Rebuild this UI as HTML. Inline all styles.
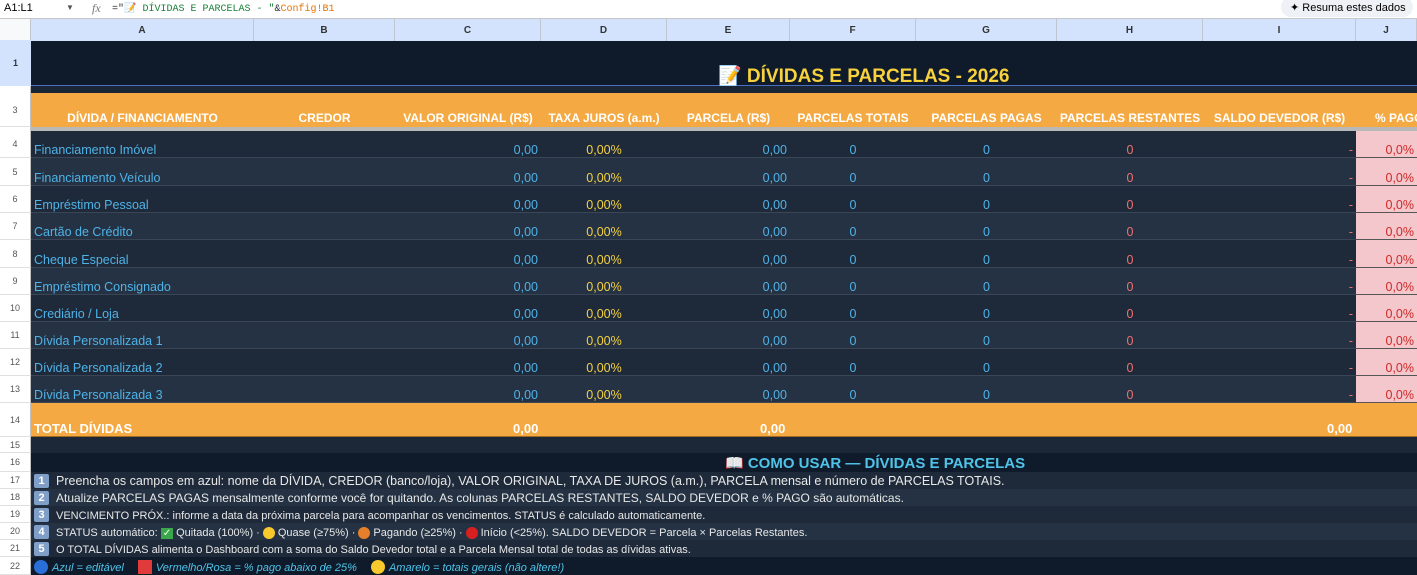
<!DOCTYPE html>
<html><head><meta charset="utf-8"><style>
*{box-sizing:border-box;margin:0;padding:0}
body{width:1417px;height:575px;overflow:hidden;background:#fff;font-family:"Liberation Sans",Arial,sans-serif;font-size:12px;position:relative}
.fb{position:absolute;left:0;top:0;width:1417px;height:19px;background:#fff;border-bottom:1px solid #c7c7c7}
.row{position:absolute;left:0;width:1417px;display:grid;grid-template-columns:31px 223px 141px 146px 126px 123px 126px 141px 146px 153px 61px}
.row>div{overflow:hidden;white-space:nowrap;display:flex;align-items:flex-end;padding:0 3px 3px}
.rh{background:#fff;color:#555;font-size:9px;justify-content:center;align-items:center!important;padding:0!important;border-right:1px solid #c0c0c0;border-bottom:1px solid #e0e0e0}
.ch>div{background:#d3e3fd;color:#333;font-size:10px;font-weight:bold;justify-content:center;align-items:center;border-right:1px solid #c0c6d0;padding:0}
.r{justify-content:flex-end}.c{justify-content:center}
.hd>div:not(.rh){background:#f4a942;color:#fff;font-weight:bold;justify-content:center;font-size:12px;padding-bottom:2px}
.d>div:not(.rh){color:#4fb3e8;font-size:12.5px;padding-bottom:0}
.d.o>div:not(.rh){background:#1e2a3a;border-bottom:1px solid #3a4656}
.d.e>div:not(.rh){background:#243243;border-bottom:1px solid #3a4656}
.d>div.y{color:#f5d142}.d>div.p{color:#f07070}.d>div.k{background:#f4c7cc!important;color:#d02828!important;border-bottom:1px solid #555!important}
.ins>div:not(.rh){color:#e8e8e8;font-size:12px;padding-bottom:1px}
.num{display:inline-block;width:15px;height:14px;background:#7f9fc8;color:#fff;font-weight:bold;font-size:11px;text-align:center;line-height:14px;border-radius:2px;margin-right:7px}
.dot{display:inline-block;width:12px;height:12px;border-radius:50%;vertical-align:-2px;margin:0 3px}
</style></head><body>
<div class="fb">
<span style="position:absolute;left:4px;top:2px;font-size:11px">A1:L1</span>
<span style="position:absolute;left:66px;top:3px;font-size:8px;color:#555">▼</span>
<span style="position:absolute;left:92px;top:1px;font-size:12px;color:#777;font-style:italic;font-family:'Liberation Serif',serif">fx</span>
<span style="position:absolute;left:112px;top:3px;font-family:'Liberation Mono',monospace;font-size:10px;color:#333">="📝 <span style="color:#188038">DÍVIDAS E PARCELAS - "</span>&amp;<span style="color:#e37400">Config!B1</span></span>
<div style="position:absolute;left:1281px;top:-3px;width:132px;height:20px;background:#eef1f6;border-radius:10px;font-size:11px;padding:4px 0 0 9px">✦ Resuma estes dados</div>
</div>
<div class="row ch" style="top:19px;height:22px"><div style="background:#f8f9fa"></div><div>A</div><div>B</div><div>C</div><div>D</div><div>E</div><div>F</div><div>G</div><div>H</div><div>I</div><div>J</div></div>
<div style="position:absolute;left:0;top:40px;width:31px;height:46px;background:#d3e3fd;font-size:9px;display:flex;align-items:center;justify-content:center;font-weight:bold;color:#333">1</div>
<div style="position:absolute;left:31px;top:41px;width:1386px;height:45px;background:#0f1b2b;border-bottom:1px solid #4a6fc0"></div>
<div style="position:absolute;left:718px;top:64px;color:#f7d23c;font-weight:bold;font-size:19px">📝 DÍVIDAS E PARCELAS - 2026</div>
<div style="position:absolute;left:0;top:86px;width:31px;height:7px;background:#fff;border-right:1px solid #c0c0c0"></div>
<div style="position:absolute;left:31px;top:86px;width:1386px;height:7px;background:#1a2536"></div>
<div class="row hd" style="top:93px;height:34px"><div class="rh">3</div><div>DÍVIDA / FINANCIAMENTO</div><div>CREDOR</div><div>VALOR ORIGINAL (R$)</div><div>TAXA JUROS (a.m.)</div><div>PARCELA (R$)</div><div>PARCELAS TOTAIS</div><div>PARCELAS PAGAS</div><div>PARCELAS RESTANTES</div><div>SALDO DEVEDOR (R$)</div><div style="justify-content:flex-start;padding-left:19px">% PAGO</div></div>
<div style="position:absolute;left:31px;top:127px;width:1386px;height:4px;background:#b8b8b8"></div>
<div style="position:absolute;left:0;top:127px;width:31px;height:4px;background:#fff;border-right:1px solid #c0c0c0"></div>

<div class="row d o" style="top:131px;height:27px"><div class="rh">4</div><div>Financiamento Imóvel</div><div></div><div class="r">0,00</div><div class="c y">0,00%</div><div class="r">0,00</div><div class="c">0</div><div class="c">0</div><div class="c p">0</div><div class="r p">-</div><div class="r k">0,0%</div></div>
<div class="row d e" style="top:158px;height:28px"><div class="rh">5</div><div>Financiamento Veículo</div><div></div><div class="r">0,00</div><div class="c y">0,00%</div><div class="r">0,00</div><div class="c">0</div><div class="c">0</div><div class="c p">0</div><div class="r p">-</div><div class="r k">0,0%</div></div>
<div class="row d o" style="top:186px;height:27px"><div class="rh">6</div><div>Empréstimo Pessoal</div><div></div><div class="r">0,00</div><div class="c y">0,00%</div><div class="r">0,00</div><div class="c">0</div><div class="c">0</div><div class="c p">0</div><div class="r p">-</div><div class="r k">0,0%</div></div>
<div class="row d e" style="top:213px;height:27px"><div class="rh">7</div><div>Cartão de Crédito</div><div></div><div class="r">0,00</div><div class="c y">0,00%</div><div class="r">0,00</div><div class="c">0</div><div class="c">0</div><div class="c p">0</div><div class="r p">-</div><div class="r k">0,0%</div></div>
<div class="row d o" style="top:240px;height:28px"><div class="rh">8</div><div>Cheque Especial</div><div></div><div class="r">0,00</div><div class="c y">0,00%</div><div class="r">0,00</div><div class="c">0</div><div class="c">0</div><div class="c p">0</div><div class="r p">-</div><div class="r k">0,0%</div></div>
<div class="row d e" style="top:268px;height:27px"><div class="rh">9</div><div>Empréstimo Consignado</div><div></div><div class="r">0,00</div><div class="c y">0,00%</div><div class="r">0,00</div><div class="c">0</div><div class="c">0</div><div class="c p">0</div><div class="r p">-</div><div class="r k">0,0%</div></div>
<div class="row d o" style="top:295px;height:27px"><div class="rh">10</div><div>Crediário / Loja</div><div></div><div class="r">0,00</div><div class="c y">0,00%</div><div class="r">0,00</div><div class="c">0</div><div class="c">0</div><div class="c p">0</div><div class="r p">-</div><div class="r k">0,0%</div></div>
<div class="row d e" style="top:322px;height:27px"><div class="rh">11</div><div>Dívida Personalizada 1</div><div></div><div class="r">0,00</div><div class="c y">0,00%</div><div class="r">0,00</div><div class="c">0</div><div class="c">0</div><div class="c p">0</div><div class="r p">-</div><div class="r k">0,0%</div></div>
<div class="row d o" style="top:349px;height:27px"><div class="rh">12</div><div>Dívida Personalizada 2</div><div></div><div class="r">0,00</div><div class="c y">0,00%</div><div class="r">0,00</div><div class="c">0</div><div class="c">0</div><div class="c p">0</div><div class="r p">-</div><div class="r k">0,0%</div></div>
<div class="row d e" style="top:376px;height:27px"><div class="rh">13</div><div>Dívida Personalizada 3</div><div></div><div class="r">0,00</div><div class="c y">0,00%</div><div class="r">0,00</div><div class="c">0</div><div class="c">0</div><div class="c p">0</div><div class="r p">-</div><div class="r k">0,0%</div></div>

<div class="row" style="top:403px;height:34px"><div class="rh">14</div><div style="background:#f4a942;color:#fff;font-weight:bold;font-size:13px;grid-column:2/12;position:relative;border-bottom:1px solid #a06a20;padding-bottom:0">TOTAL DÍVIDAS<span style="position:absolute;left:482px;bottom:0">0,00</span><span style="position:absolute;left:729px;bottom:0">0,00</span><span style="position:absolute;left:1296px;bottom:0">0,00</span></div></div>
<div class="row" style="top:437px;height:16px"><div class="rh">15</div><div style="background:#1c2737;grid-column:2/12"></div></div>
<div class="row" style="top:453px;height:19px"><div class="rh">16</div><div style="background:#0f1b2b;grid-column:2/12;padding:0 0 0 694px;color:#4fc3e8;font-weight:bold;font-size:15px;align-items:flex-end;padding-bottom:0;line-height:16px">📖 COMO USAR — DÍVIDAS E PARCELAS</div></div>
<div class="row ins" style="top:472px;height:17px"><div class="rh">17</div><div style="background:#1e2a3a;grid-column:2/12;font-size:12.5px!important"><span class="num">1</span>Preencha os campos em azul: nome da DÍVIDA, CREDOR (banco/loja), VALOR ORIGINAL, TAXA DE JUROS (a.m.), PARCELA mensal e número de PARCELAS TOTAIS.</div></div>
<div class="row ins" style="top:489px;height:17px"><div class="rh">18</div><div style="background:#243243;grid-column:2/12"><span class="num">2</span>Atualize PARCELAS PAGAS mensalmente conforme você for quitando. As colunas PARCELAS RESTANTES, SALDO DEVEDOR e % PAGO são automáticas.</div></div>
<div class="row ins" style="top:506px;height:17px"><div class="rh">19</div><div style="background:#1e2a3a;grid-column:2/12;font-size:11px!important"><span class="num">3</span>VENCIMENTO PRÓX.: informe a data da próxima parcela para acompanhar os vencimentos. STATUS é calculado automaticamente.</div></div>
<div class="row ins" style="top:523px;height:17px"><div class="rh">20</div><div style="background:#243243;grid-column:2/12;font-size:11px!important"><span class="num">4</span>STATUS automático: <span style="background:#3aa84a;color:#fff;font-size:10px;padding:0 2px;margin:0 3px">✓</span>Quitada (100%) · <span class="dot" style="background:#f7c92c"></span>Quase (≥75%) · <span class="dot" style="background:#e57f2a"></span>Pagando (≥25%) · <span class="dot" style="background:#d92020"></span>Início (&lt;25%). SALDO DEVEDOR = Parcela × Parcelas Restantes.</div></div>
<div class="row ins" style="top:540px;height:17px"><div class="rh">21</div><div style="background:#1e2a3a;grid-column:2/12;font-size:11px!important"><span class="num">5</span>O TOTAL DÍVIDAS alimenta o Dashboard com a soma do Saldo Devedor total e a Parcela Mensal total de todas as dívidas ativas.</div></div>
<div class="row" style="top:557px;height:18px"><div class="rh">22</div><div style="background:#0f1b2b;grid-column:2/12;color:#4fc3e8;font-style:italic;font-size:11px;padding-bottom:1px"><span class="dot" style="background:#2a6fd8;width:14px;height:14px;margin:0 4px 0 0"></span>Azul = editável<span style="display:inline-block;width:14px;height:14px;background:#e03a3a;margin:0 4px 0 14px"></span>Vermelho/Rosa = % pago abaixo de 25%<span class="dot" style="background:#f7c92c;width:14px;height:14px;margin:0 4px 0 14px"></span>Amarelo = totais gerais (não altere!)</div></div>
</body></html>
